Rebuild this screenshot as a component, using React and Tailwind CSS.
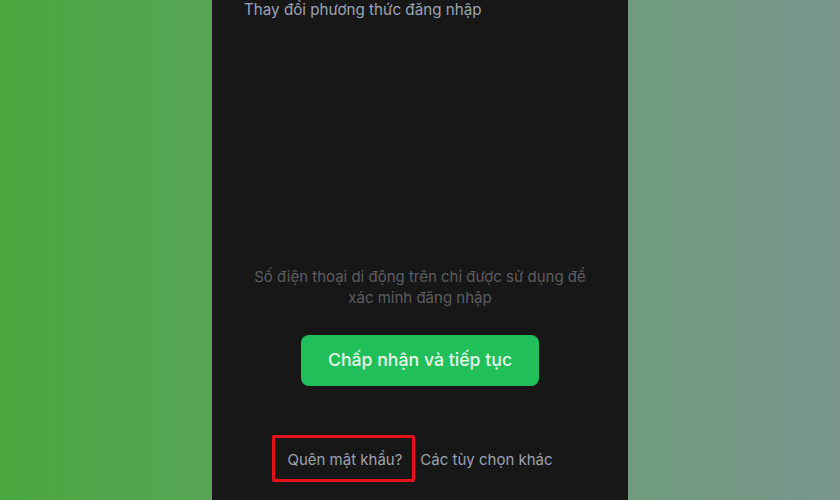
export default function App() {
  return (
    <div
      className="w-[840px] h-[500px] overflow-hidden flex justify-center bg-gradient-to-r from-[#4aa83e] via-[#62a168] to-[#7a968e]"
      style={{ fontFamily: 'Inter, "Noto Sans", sans-serif' }}
    >
      <div className="w-[416px] h-full bg-[#171717] flex flex-col">
        <div className="pl-[32px] text-[15.2px] leading-[19px] text-[#9aa3b2]">
          Thay đổi phương thức đăng nhập
        </div>

        <p className="mt-[247px] px-[40px] text-center text-[15px] leading-[21px] text-[#5d5d60]">
          Số điện thoại di động trên chỉ được sử dụng để xác minh đăng nhập
        </p>

        <div className="mt-[27px] flex justify-center">
          <button className="w-[238px] h-[51px] rounded-[8px] bg-[#20bf5a] text-[17.7px] font-medium text-[#e8f8ec]">
            Chấp nhận và tiếp tục
          </button>
        </div>

        <div className="mt-[64px] flex justify-center gap-[18px] text-[15px] leading-[20px] text-[#9ca3b0]">
          <span className="relative">
            Quên mật khẩu?
            <span className="absolute -left-[15px] -right-[13px] -top-[15px] -bottom-[12px] border-[3px] border-[#e3121b] rounded-[2px]" />
          </span>
          <span>Các tùy chọn khác</span>
        </div>
      </div>
    </div>
  );
}
